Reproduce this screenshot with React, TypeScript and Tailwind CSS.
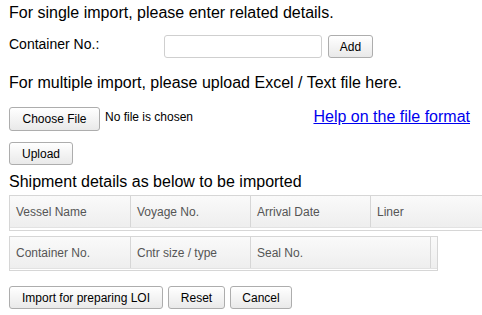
const btn =
  "h-[23px] rounded-[3px] border border-[#adadad] bg-gradient-to-b from-[#ffffff] to-[#e9e9e9] text-[12px] text-black leading-none"

function HeadCell({ label, w, last }: { label?: string; w: string; last?: boolean }) {
  return (
    <div
      className={`${w} shrink-0 h-[31px] flex items-center pl-[6px] text-[12px] text-[#555] ${
        last ? "" : "border-r border-[#d6d6d6]"
      }`}
    >
      {label}
    </div>
  )
}

export default function App() {
  return (
    <div className="w-[482px] h-[315px] overflow-hidden bg-white pl-[9px] font-['Liberation_Sans',Arial,sans-serif] text-black">
      <p className="pt-[4px] text-[16px] leading-[18px]">For single import, please enter related details.</p>

      <div className="mt-[13px] flex items-start h-[23px]">
        <span className="w-[155px] pt-[1px] text-[14px] leading-[16px]">Container No.:</span>
        <input className="w-[158px] h-[23px] rounded-[3px] border border-[#cfcfcf] bg-white" />
        <button className={`${btn} ml-[6px] w-[45px]`}>Add</button>
      </div>

      <p className="mt-[16px] text-[16px] leading-[18px]">For multiple import, please upload Excel / Text file here.</p>

      <div className="mt-[15px] flex items-start">
        <button className={`${btn} h-[24px] w-[91px]`}>Choose File</button>
        <span className="ml-[5px] pt-[3px] text-[12px] leading-[14px]">No file is chosen</span>
        <a href="#" className="ml-auto mr-[12px] pt-[1px] text-[16px] leading-[18px] text-[#0000ee] underline">
          Help on the file format
        </a>
      </div>

      <button className={`${btn} mt-[11px] h-[22px] w-[64px] block`}>Upload</button>

      <p className="mt-[8px] text-[16px] leading-[18px]">Shipment details as below to be imported</p>

      <div className="mt-[4px] w-[520px] border-t border-l border-b border-[#d6d6d6]">
        <div className="flex border-b border-[#e2e2e2] bg-gradient-to-b from-[#fafafa] to-[#eeeeee]">
          <HeadCell label="Vessel Name" w="w-[121px]" />
          <HeadCell label="Voyage No." w="w-[120px]" />
          <HeadCell label="Arrival Date" w="w-[120px]" />
          <HeadCell label="Liner" w="w-[150px]" last />
        </div>
        <div className="h-[2px] bg-white" />
      </div>

      <div className="mt-[5px] w-[429px] border border-[#d6d6d6]">
        <div className="flex border-b border-[#e2e2e2] bg-gradient-to-b from-[#fafafa] to-[#eeeeee]">
          <HeadCell label="Container No." w="w-[121px]" />
          <HeadCell label="Cntr size / type" w="w-[120px]" />
          <HeadCell label="Seal No." w="w-[180px]" />
          <HeadCell w="w-[6px]" last />
        </div>
        <div className="h-[1px] bg-white" />
      </div>

      <div className="mt-[15px] flex gap-[5px]">
        <button className={`${btn} w-[154px]`}>Import for preparing LOI</button>
        <button className={`${btn} w-[57px]`}>Reset</button>
        <button className={`${btn} w-[62px]`}>Cancel</button>
      </div>
    </div>
  )
}
